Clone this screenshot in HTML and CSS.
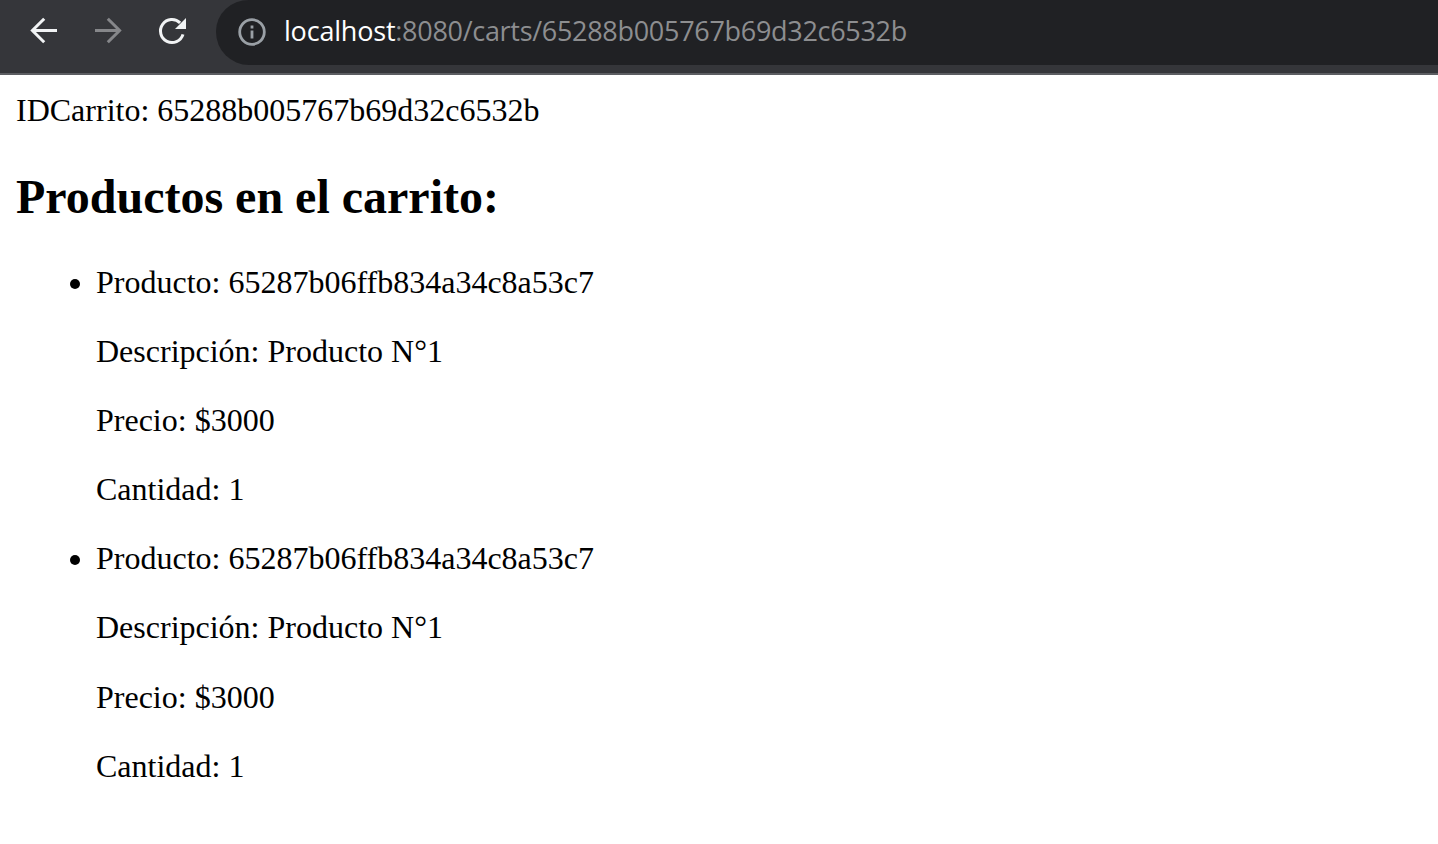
FILE: index.html
```html
<!DOCTYPE html>
<html lang="es">
<head>
<meta charset="utf-8">
<title>Carrito</title>
<link rel="stylesheet" href="styles.css">
</head>
<body>
<header class="toolbar">
  <nav class="controls">
    <svg class="icon" viewBox="0 0 32 32"><path d="M29 15.5H4.5M16.2 3.7L4.4 15.5L16.2 27.3"/></svg>
    <svg class="icon icon-disabled" viewBox="0 0 32 32"><path d="M3 15.5H27.5M15.8 3.7L27.6 15.5L15.8 27.3"/></svg>
    <svg class="icon" viewBox="0 0 32 32"><path d="M27 19.4A11.5 11.5 0 1 1 24.1 7.9"/><path class="solid" d="M30 3V14H19Z"/></svg>
  </nav>
  <div class="address">
    <svg class="info" viewBox="0 0 28 28"><circle cx="14" cy="14" r="12.3"/><path d="M14 12.5v8M14 7.5v3"/></svg>
    <div class="url"><span class="host">localhost</span><span class="path">:8080/carts/65288b005767b69d32c6532b</span></div>
  </div>
</header>
<main class="page">
  <p class="cart-id">IDCarrito: 65288b005767b69d32c6532b</p>
  <h2 class="title">Productos en el carrito:</h2>
  <ul class="products">
    <li>
      <p>Producto: 65287b06ffb834a34c8a53c7</p>
      <p>Descripción: Producto N°1</p>
      <p>Precio: $3000</p>
      <p>Cantidad: 1</p>
    </li>
    <li>
      <p>Producto: 65287b06ffb834a34c8a53c7</p>
      <p>Descripción: Producto N°1</p>
      <p>Precio: $3000</p>
      <p>Cantidad: 1</p>
    </li>
  </ul>
</main>
</body>
</html>
```
FILE: styles.css
```css
body {
  margin: 0;
  background: #fff;
  color: #000;
  font: 32px/37.14px "Liberation Serif", serif;
  overflow: hidden;
}
.toolbar {
  box-sizing: border-box;
  height: 75px;
  display: flex;
  align-items: flex-start;
  background: #35363a;
  border-bottom: 2px solid #5c5e62;
}
.controls {
  display: flex;
  gap: 32px;
  width: 188px;
  padding: 15px 0 0 28px;
}
.icon {
  width: 32px;
  height: 32px;
  flex: none;
  fill: none;
  stroke: #f1f3f4;
  stroke-width: 3;
}
.icon .solid {
  fill: #f1f3f4;
  stroke: none;
}
.icon-disabled { stroke: #86878a; }
.address {
  flex: 1;
  box-sizing: border-box;
  height: 65px;
  display: flex;
  align-items: center;
  padding: 0 0 3px 22px;
  background: #202124;
  border-radius: 33px 0 0 33px / 31px 0 0 33px;
}
.info {
  width: 28px;
  height: 28px;
  margin: 1px 18px 0 0;
  fill: none;
  stroke: #9aa0a6;
  stroke-width: 2.8;
}
.url {
  font: 27px/40px "Open Sans", sans-serif;
  white-space: nowrap;
}
.host { color: #fff; letter-spacing: -0.2px; }
.path { color: #8d8e90; letter-spacing: -0.3px; }
.page { padding: 16.6px 16px; }
.cart-id { margin: 0; }
.title {
  margin: 40px 0;
  font-size: 48px;
  line-height: 55px;
}
.products {
  margin: 0;
  padding-left: 80px;
}
.products p { margin: 0 0 32px; }
```
